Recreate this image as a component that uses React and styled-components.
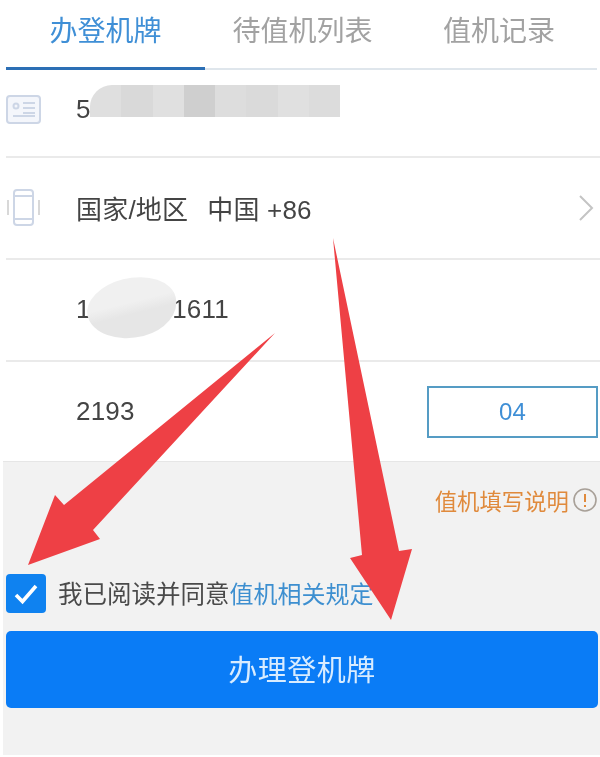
import React from "react";
import styled, { createGlobalStyle } from "styled-components";

const Global = createGlobalStyle`
  html, body { margin: 0; padding: 0; background: #fff; }
  body { font-family: "Liberation Sans", "Noto Sans CJK SC", sans-serif; }
`;

const Page = styled.div`
  position: relative;
  width: 600px;
  height: 757px;
  overflow: hidden;
  background: #fff;
  filter: blur(0.7px);
`;
const Tabs = styled.div`
  display: grid;
  grid-template-columns: 199px 195px 198px;
  height: 70px;
  margin: 0 3px 0 6px;
  border-bottom: 2px solid #dfe6ec;
  box-sizing: border-box;
`;
const Tab = styled.div`
  display: flex;
  align-items: center;
  justify-content: center;
  height: 70px;
  box-sizing: border-box;
  padding-bottom: 10px;
  font-size: 28px;
  color: ${(p) => (p.$active ? "#3f8fd6" : "#a2a2a2")};
  border-bottom: 3px solid ${(p) => (p.$active ? "#2c6fb5" : "transparent")};
`;
const Row = styled.div`
  position: relative;
  display: flex;
  align-items: center;
  height: ${(p) => p.$h}px;
  box-sizing: border-box;
  margin-left: 6px;
  padding-bottom: ${(p) => p.$pb || 0}px;
  border-bottom: ${(p) => (p.$last ? "none" : "2px solid #eaeaea")};
  font-size: 26px;
  letter-spacing: 0.2px;
  color: #444;
`;
const IconSlot = styled.div`
  display: flex;
  align-items: center;
  width: 70px;
  flex: none;
`;
const Value = styled.div`
  flex: 1;
  white-space: pre;
  margin-bottom: 1px;
`;
const Region = styled.span`
  margin-right: 19px;
`;
const Chevron = styled.svg`
  width: 18px;
  height: 30px;
  margin-right: 5px;
`;
const Mosaic = styled.div`
  position: absolute;
  left: 84px;
  top: 15px;
  width: 250px;
  height: 32px;
  display: flex;
  border-top-left-radius: 22px;
  overflow: hidden;
`;
const MosaicCell = styled.div`
  flex: 1;
  background: ${(p) => p.$c};
`;
const Smudge = styled.div`
  position: absolute;
  left: 81px;
  top: 18px;
  width: 90px;
  height: 60px;
  background: linear-gradient(#f0f0f0 40%, #e6e6e6 60%);
  border-radius: 48% 52% 45% 55% / 45% 50% 50% 55%;
  transform: rotate(-14deg);
`;
const CodeBox = styled.div`
  width: 171px;
  height: 52px;
  box-sizing: border-box;
  margin-right: 2px;
  display: flex;
  align-items: center;
  justify-content: center;
  border: 2px solid #559cc4;
  color: #3f8fd6;
  font-size: 24px;
`;
const Footer = styled.div`
  margin-left: 3px;
  height: 294px;
  box-sizing: border-box;
  background: #f2f2f2;
  border-top: 1px solid #e6e6e6;
  padding: 22px 2px 0 3px;
`;
const Note = styled.div`
  display: flex;
  align-items: center;
  justify-content: flex-end;
  gap: 3px;
  height: 32px;
  font-size: 22.4px;
  color: #e08a3c;
`;
const NoteIcon = styled.svg`
  width: 26px;
  height: 26px;
  flex: none;
`;
const Agree = styled.div`
  display: flex;
  align-items: center;
  gap: 12px;
  margin-top: 58px;
  height: 39px;
  font-size: 24.5px;
  color: #4a4a4a;
`;
const AgreeText = styled.span`
  margin-bottom: 3px;
`;
const Check = styled.div`
  width: 40px;
  height: 39px;
  flex: none;
  background: #0f82f0;
  border-radius: 4px;
  display: flex;
  align-items: center;
  justify-content: center;
`;
const Rule = styled.span`
  font-size: 24px;
  color: #3d8fd0;
`;
const Submit = styled.div`
  margin-top: 18px;
  height: 77px;
  box-sizing: border-box;
  padding-bottom: 3px;
  border-radius: 5px;
  background: #0a7cf6;
  color: #d8ecff;
  font-size: 29px;
  display: flex;
  align-items: center;
  justify-content: center;
  letter-spacing: 0.5px;
`;
const Arrows = styled.svg`
  position: absolute;
  left: 0;
  top: 0;
  width: 600px;
  height: 757px;
  pointer-events: none;
`;

const cells = ["#dfdfdf", "#d9d9d9", "#e0e0e0", "#cfcfcf", "#dddddd", "#dadada", "#e0e0e0", "#dcdcdc"];

export default function App() {
  return (
    <Page>
      <Global />
      <Tabs>
        <Tab $active>办登机牌</Tab>
        <Tab>待值机列表</Tab>
        <Tab>值机记录</Tab>
      </Tabs>
      <Row $h={88} $pb={6}>
        <IconSlot>
          <svg width="36" height="30" viewBox="0 0 36 30" fill="none" stroke="#cdd6e6" strokeWidth="2">
            <rect x="1" y="1" width="33" height="27" rx="3" fill="#f4f6fb" />
            <circle cx="10" cy="11" r="2.5" />
            <path d="M17 8h12M17 13h12M17 18h12M7 21h22" />
          </svg>
        </IconSlot>
        <Value>5</Value>
        <Mosaic>
          {cells.map((c, i) => (
            <MosaicCell key={i} $c={c} />
          ))}
        </Mosaic>
      </Row>
      <Row $h={102}>
        <IconSlot>
          <svg width="36" height="38" viewBox="0 0 36 38" fill="none" stroke="#cdd6e6" strokeWidth="2">
            <rect x="8" y="1" width="19" height="35" rx="3" />
            <path d="M8 7h19M8 30h19" />
            <path d="M2 11v15M33 11v15" stroke="#d8d8d8" />
          </svg>
        </IconSlot>
        <Value>
          <Region>国家/地区</Region>中国 +86
        </Value>
        <Chevron viewBox="0 0 18 30" fill="none" stroke="#c4c4c4" strokeWidth="2">
          <path d="M3 3l12 12-12 12" />
        </Chevron>
      </Row>
      <Row $h={102}>
        <IconSlot />
        <Value>1{"         "}01611</Value>
        <Smudge />
      </Row>
      <Row $h={99} $last>
        <IconSlot />
        <Value>2193</Value>
        <CodeBox>04</CodeBox>
      </Row>
      <Footer>
        <Note>
          值机填写说明
          <NoteIcon viewBox="0 0 26 26" fill="none">
            <circle cx="13" cy="13" r="11" stroke="#a8a098" strokeWidth="1.6" />
            <path d="M13 7v8M13 18v2" stroke="#e08a3c" strokeWidth="2" />
          </NoteIcon>
        </Note>
        <Agree>
          <Check>
            <svg width="26" height="22" viewBox="0 0 26 22" fill="none" stroke="#fff" strokeWidth="3.6">
              <path d="M3 12l6.5 6.5L23 3" />
            </svg>
          </Check>
          <AgreeText>
            我已阅读并同意<Rule>值机相关规定</Rule>
          </AgreeText>
        </Agree>
        <Submit>办理登机牌</Submit>
      </Footer>
      <Arrows viewBox="0 0 600 757">
        <polygon points="275,333 64,505 55,495 28,565 100,539 93,530" fill="#ee4045" />
        <polygon points="333,238 362,555 350,558 391,620 412,549 399,551" fill="#ee4045" />
      </Arrows>
    </Page>
  );
}
